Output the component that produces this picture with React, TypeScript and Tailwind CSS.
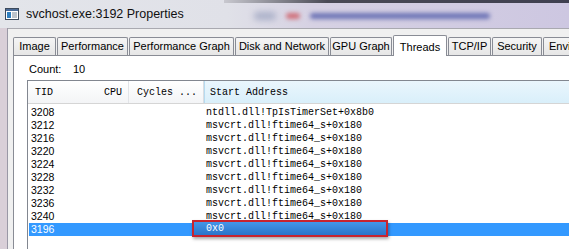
import React from 'react';

const tabs = [
  { label: 'Image', w: 'w-[43px]' },
  { label: 'Performance', w: 'w-[71px]' },
  { label: 'Performance Graph', w: 'w-[105px]' },
  { label: 'Disk and Network', w: 'w-[94px]' },
  { label: 'GPU Graph', w: 'w-[62px]' },
  { label: 'Threads', w: 'w-[54px]', active: true },
  { label: 'TCP/IP', w: 'w-[43px]' },
  { label: 'Security', w: 'w-[50px]' },
  { label: 'Environment', w: 'w-[80px]' },
];

const rows = [
  { tid: '3208', addr: 'ntdll.dll!TpIsTimerSet+0x8b0' },
  { tid: '3212', addr: 'msvcrt.dll!ftime64_s+0x180' },
  { tid: '3216', addr: 'msvcrt.dll!ftime64_s+0x180' },
  { tid: '3220', addr: 'msvcrt.dll!ftime64_s+0x180' },
  { tid: '3224', addr: 'msvcrt.dll!ftime64_s+0x180' },
  { tid: '3228', addr: 'msvcrt.dll!ftime64_s+0x180' },
  { tid: '3232', addr: 'msvcrt.dll!ftime64_s+0x180' },
  { tid: '3236', addr: 'msvcrt.dll!ftime64_s+0x180' },
  { tid: '3240', addr: 'msvcrt.dll!ftime64_s+0x180' },
];

function WindowIcon() {
  return (
    <svg width="14" height="12" viewBox="0 0 14 12" className="shrink-0">
      <rect x="0.5" y="0.5" width="13" height="11" fill="#ffffff" stroke="#3c4a5c" />
      <rect x="1" y="1" width="12" height="2" fill="#4a6a96" />
      <rect x="2" y="4" width="4" height="6" fill="#2f7fc0" />
      <rect x="7" y="4.5" width="5" height="1" fill="#7a8898" />
      <rect x="7" y="6.5" width="5" height="1" fill="#7a8898" />
      <rect x="7" y="8.5" width="5" height="1" fill="#7a8898" />
    </svg>
  );
}

export default function App() {
  return (
    <div className="w-[569px] h-[249px] overflow-hidden flex flex-col bg-[#d8cfd9] font-['Liberation_Sans',Arial,sans-serif] text-black">
      {/* Title bar (glass) */}
      <div className="h-[28px] shrink-0 flex items-center bg-[linear-gradient(to_right,#e3e5ea_0%,#e0e1e8_40%,#d6d1e3_55%,#cdc7e1_100%)] overflow-hidden">
        <div className="pl-[5px] pr-[7px] flex items-center">
          <WindowIcon />
        </div>
        <span className="text-[12.5px] leading-none text-[#101010]">svchost.exe:3192 Properties</span>
        <div className="flex-1 h-full flex flex-col">
          <div className="h-[3px] ml-[40px] bg-[linear-gradient(to_right,#c8c8cf,#4a4a55_30%,#3f4050)] blur-[0.5px]" />
          <div className="flex-1 flex items-center pl-[70px] gap-[10px]">
            <div className="w-[22px] h-[8px] rounded-full bg-[#aab0c8] blur-[3px]" />
            <div className="w-[14px] h-[6px] rounded-full bg-[#d0707a] blur-[2px]" />
            <div className="w-[180px] h-[6px] rounded-full bg-[#6d74b6] blur-[2px]" />
          </div>
        </div>
      </div>

      {/* Body */}
      <div className="flex-1 flex min-h-0">
        <div className="w-[8px] shrink-0 bg-[#d9cfd8] border-r border-[#9a98a6]" />
        <div className="flex-1 min-w-0 bg-[#f0f0f0] border-t border-[#a9a9b0] pl-[5px] flex flex-col">
          {/* Tabs */}
          <div className="h-[26px] shrink-0 flex items-end gap-[1px] pt-[6px] whitespace-nowrap">
            {tabs.map((t) =>
              t.active ? (
                <div
                  key={t.label}
                  className={`${t.w} shrink-0 h-[21px] -mb-[1px] relative z-10 bg-white border border-b-0 border-[#898c95] rounded-t-[2px] flex items-start justify-center pt-[3px] text-[11px]`}
                >
                  {t.label}
                </div>
              ) : (
                <div
                  key={t.label}
                  className={`${t.w} shrink-0 h-[18px] overflow-hidden bg-[linear-gradient(#f5f5f5,#e6e6e6)] border border-b-0 border-[#898c95] rounded-t-[2px] flex items-center pl-[5px] text-[11px] ${t.label === 'Environment' ? 'justify-start' : 'justify-center pr-[5px] pl-0'}`}
                >
                  {t.label}
                </div>
              ),
            )}
          </div>

          {/* Tab page */}
          <div className="flex-1 min-h-0 bg-white border-l border-t border-[#898c95] flex flex-col">
            <div className="h-[13px] mt-[7px] ml-[15px] flex items-center text-[11px] leading-none">
              <span className="w-[44px]">Count:</span>
              <span>10</span>
            </div>

            {/* List view */}
            <div className="mt-[4px] ml-[13px] flex-1 border-l border-t border-[#828790] bg-white flex flex-col font-['Liberation_Mono',monospace] text-[10px]">
              <div className="h-[23px] shrink-0 flex border-b border-[#d5d5d5] bg-[linear-gradient(#ffffff,#f3f4f6)]">
                <div className="w-[68px] pl-[7px] flex items-center">TID</div>
                <div className="w-[33px] pr-[6px] flex items-center justify-end border-r border-[#e2e4e8]">CPU</div>
                <div className="w-[75px] pl-[8px] flex items-center border-r border-[#d9dde2]">Cycles ...</div>
                <div className="flex-1 pl-[5px] flex items-center bg-[linear-gradient(#eaf6fd,#d9effa)] border-l border-[#b6dbf0]">
                  Start Address
                </div>
              </div>

              <div className="pt-[2px] flex flex-col">
                {rows.map((r) => (
                  <div key={r.tid} className="h-[13px] flex items-center leading-none">
                    <div className="w-[176px] pl-[3px] font-['Liberation_Sans',Arial,sans-serif] text-[10.5px]">{r.tid}</div>
                    <div className="pl-[2px] whitespace-nowrap">{r.addr}</div>
                  </div>
                ))}
                <div className="h-[13px] ml-[1px] flex items-center leading-none bg-[#3399ff] text-white relative">
                  <div className="w-[175px] pl-[2px] font-['Liberation_Sans',Arial,sans-serif] text-[10.5px]">3196</div>
                  <div className="pl-[2px]">0x0</div>
                  {/* highlight box */}
                  <div className="absolute left-[163px] top-[-3px] w-[196px] h-[17px] border-2 border-[#c8232e] shadow-[1px_2px_3px_rgba(0,0,0,0.35)] bg-[linear-gradient(#4496e8,#2a74c9)] flex items-center pl-[12px]">
                    0x0
                  </div>
                </div>
              </div>
            </div>
          </div>
        </div>
      </div>
    </div>
  );
}
